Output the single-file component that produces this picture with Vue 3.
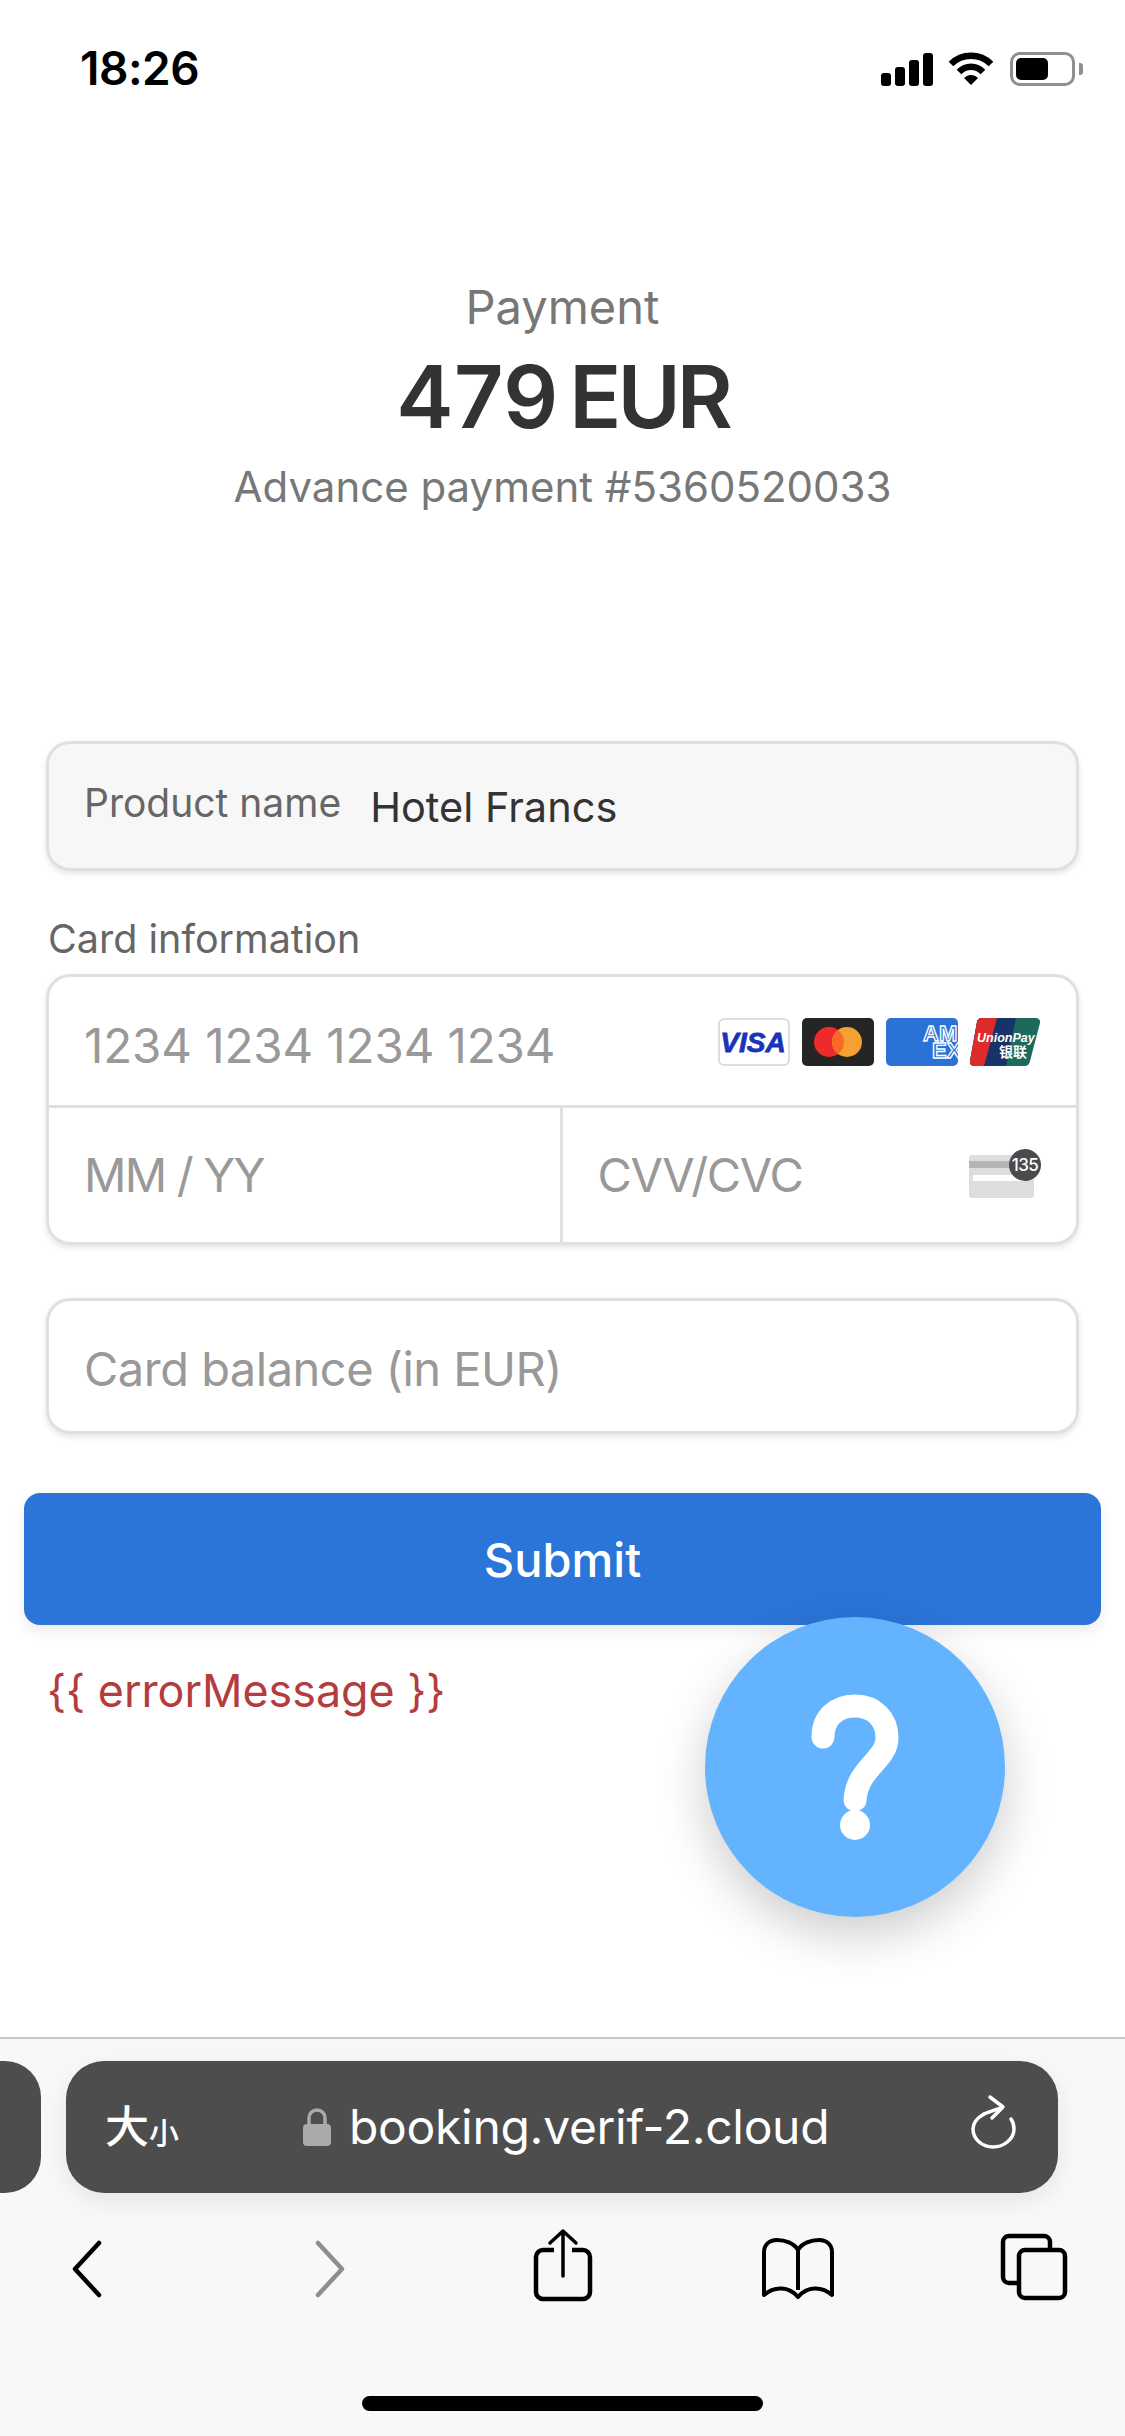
<template>
  <div class="page">
    <!-- status bar -->
    <div class="status">
      <span class="time">18:26</span>
      <div class="status-icons">
        <svg class="signal" width="52" height="34" viewBox="0 0 52 34">
          <rect x="0" y="20" width="10" height="13" rx="3" />
          <rect x="14" y="14" width="10" height="19" rx="3" />
          <rect x="28" y="7" width="10" height="26" rx="3" />
          <rect x="42" y="0" width="10" height="33" rx="3" />
        </svg>
        <svg class="wifi" width="46" height="34" viewBox="0 0 46 34">
          <path d="M3 12 C14 1 32 1 43 12" fill="none" stroke="#000" stroke-width="6.5" stroke-linecap="butt" />
          <path d="M11 20 C18 13 28 13 35 20" fill="none" stroke="#000" stroke-width="6.5" />
          <path d="M16 26 C20 22 26 22 30 26 L23 33 Z" fill="#000" />
        </svg>
        <div class="battery"><div class="battery-fill"></div></div>
        <div class="battery-cap"></div>
      </div>
    </div>

    <!-- heading -->
    <div class="heading">
      <div class="heading-label">Payment</div>
      <div class="heading-amount"><span class="digits">479</span> <span class="currency">EUR</span></div>
      <div class="heading-desc">Advance payment #5360520033</div>
    </div>

    <!-- form -->
    <div class="form">
      <div class="box product">
        <span class="product-label">Product name</span>
        <span class="product-value">Hotel Francs</span>
      </div>

      <div class="section-label">Card information</div>
      <div class="box card">
        <div class="card-row">
          <span class="placeholder number">1234 1234 1234 1234</span>
          <div class="brands">
            <svg width="72" height="48" viewBox="0 0 72 48">
              <rect x="1" y="1" width="70" height="46" rx="5" fill="#fff" stroke="#d4d4d4" stroke-width="1.5" />
              <text x="35" y="34" class="visa-text">VISA</text>
            </svg>
            <svg width="72" height="48" viewBox="0 0 72 48">
              <rect width="72" height="48" rx="5" fill="#252525" />
              <circle cx="27" cy="24" r="15" fill="#ee2b2b" />
              <circle cx="45" cy="24" r="15" fill="#f4a033" />
              <path d="M36 12 a15 15 0 0 1 0 24 a15 15 0 0 1 0 -24 Z" fill="#fb6a24" />
            </svg>
            <svg width="72" height="48" viewBox="0 0 72 48">
              <defs>
                <clipPath id="amex-clip"><rect width="72" height="48" rx="5" /></clipPath>
              </defs>
              <g clip-path="url(#amex-clip)">
                <rect width="72" height="48" fill="#2b72d6" />
                <text x="37" y="23" class="amex-text">AM</text>
                <text x="46" y="40" class="amex-text">EX</text>
              </g>
            </svg>
            <svg width="70" height="48" viewBox="0 0 70 48">
              <defs>
                <clipPath id="up-clip"><path d="M11 0 H66 a4 4 0 0 1 4 5 L60 43 a6 6 0 0 1 -6 5 H4 a4 4 0 0 1 -4 -5 L7 4 a5 5 0 0 1 4 -4 Z" /></clipPath>
              </defs>
              <g clip-path="url(#up-clip)">
                <rect width="70" height="48" fill="#1c6a5e" />
                <path d="M0 0 H46 L36 48 H0 Z" fill="#173468" />
                <path d="M0 0 H27 L14 48 H0 Z" fill="#df2a2a" />
                <text x="7" y="24" class="up-text">UnionPay</text>
                <text x="29" y="39" class="up-cn">银联</text>
              </g>
            </svg>
          </div>
        </div>
        <div class="card-split">
          <div class="card-cell"><span class="placeholder expiry">MM / YY</span></div>
          <div class="card-cell cvv">
            <span class="placeholder code">CVV/CVC</span>
            <svg class="cvv-icon" width="72" height="50" viewBox="0 0 72 50">
              <rect x="0" y="6" width="65" height="43" rx="3" fill="#dddddd" />
              <rect x="0" y="12" width="65" height="7" fill="#b5b5b5" />
              <rect x="4" y="26" width="50" height="6" fill="#fff" />
              <circle cx="56" cy="16" r="16" fill="#4b4b4b" />
              <text x="56" y="22" class="cvv-text">135</text>
            </svg>
          </div>
        </div>
      </div>

      <div class="box balance"><span class="placeholder amount">Card balance (in EUR)</span></div>
    </div>

    <button class="submit">Submit</button>
    <p class="error" v-pre>{{ errorMessage }}</p>

    <!-- floating help button -->
    <div class="fab">
      <svg width="90" height="148" viewBox="0 0 90 148">
        <path d="M13 44 C13 25 26 13 45 13 C64 13 77 26 77 45 C77 67 47 75 45 107" fill="none" stroke="#fff" stroke-width="23" stroke-linecap="round" />
        <ellipse cx="45" cy="132" rx="15" ry="15" fill="#fff" />
      </svg>
    </div>

    <!-- safari toolbar -->
    <div class="toolbar">
      <div class="url-row">
        <div class="tab-peek"></div>
        <div class="url-bar">
          <span class="aa"><span class="aa-big">大</span><span class="aa-small">小</span></span>
          <div class="url-main">
            <svg width="30" height="40" viewBox="0 0 30 40">
              <path d="M7 19 V11 a8 8 0 0 1 16 0 V19" fill="none" stroke="#aaa" stroke-width="3.5" />
              <rect x="1" y="17" width="28" height="22" rx="4" fill="#aaa" />
            </svg>
            <span class="url-text">booking.verif-2.cloud</span>
          </div>
          <svg class="reload" width="48" height="56" viewBox="0 0 48 56">
            <path d="M14 20 C7 24 3 29 3 35 C3 45 12 53 23 53 C34 53 44 45 44 35 C44 31 43 28 41 25" fill="none" stroke="#fff" stroke-width="3.5" stroke-linecap="round" />
            <path d="M14 20 C18 18 22 17 31 14 M20 3 L33 13 L22 24" fill="none" stroke="#fff" stroke-width="3.5" stroke-linecap="round" stroke-linejoin="round" />
          </svg>
        </div>
      </div>

      <div class="nav-row">
        <svg class="nav-back" width="30" height="58" viewBox="0 0 30 58">
          <path d="M27 3 L3 29 L27 55" fill="none" stroke="#000" stroke-width="4.5" stroke-linecap="round" stroke-linejoin="round" />
        </svg>
        <svg class="nav-forward" width="30" height="58" viewBox="0 0 30 58">
          <path d="M3 3 L27 29 L3 55" fill="none" stroke="#8e8e8e" stroke-width="4.5" stroke-linecap="round" stroke-linejoin="round" />
        </svg>
        <svg class="nav-share" width="60" height="74" viewBox="0 0 60 74">
          <path d="M21 22 H10 a7 7 0 0 0 -7 7 V64 a7 7 0 0 0 7 7 H50 a7 7 0 0 0 7 -7 V29 a7 7 0 0 0 -7 -7 H39" fill="none" stroke="#000" stroke-width="4.5" />
          <path d="M30 3 V48 M17 15 L30 3 L43 15" fill="none" stroke="#000" stroke-width="3.5" stroke-linecap="round" stroke-linejoin="round" />
        </svg>
        <svg class="nav-book" width="74" height="62" viewBox="0 0 74 62">
          <path d="M37 12 C33 5 24 2 16 2 C8 2 3 7 3 14 V57 C13 48 28 48 37 59 C46 48 61 48 71 57 V14 C71 7 66 2 58 2 C50 2 41 5 37 12 V52" fill="none" stroke="#000" stroke-width="4" stroke-linejoin="round" />
        </svg>
        <svg class="nav-tabs" width="68" height="68" viewBox="0 0 68 68">
          <path d="M18 50 H9 a6 6 0 0 1 -6 -6 V9 a6 6 0 0 1 6 -6 H44 a6 6 0 0 1 6 6 V16" fill="none" stroke="#000" stroke-width="4.5" />
          <rect x="19" y="17" width="46" height="48" rx="6" fill="none" stroke="#000" stroke-width="4.5" />
        </svg>
      </div>

      <div class="home-indicator"></div>
    </div>
  </div>
</template>

<script setup>
</script>

<style>
html,
body {
  background: #fff;
}
</style>

<style scoped>
.page {
  position: relative;
  width: 1125px;
  height: 2436px;
  display: flex;
  flex-direction: column;
  overflow: hidden;
  background: #fff;
  font-family: Inter, "Noto Sans", sans-serif;
}

.status {
  display: flex;
  justify-content: space-between;
  height: 138px;
  padding: 44px 42px 0 80px;
  box-sizing: border-box;
}
.time {
  font-size: 46px;
  line-height: 48px;
  font-weight: 600;
  color: #000;
  letter-spacing: -0.5px;
}
.status-icons {
  display: flex;
  align-items: flex-start;
  padding-top: 8px;
}
.signal {
  fill: #000;
  margin-top: 1px;
}
.wifi {
  margin-left: 15px;
}
.battery {
  margin-left: 16px;
  width: 65px;
  height: 34px;
  box-sizing: border-box;
  border: 3px solid #8f8f8f;
  border-radius: 10px;
  padding: 3px;
}
.battery-fill {
  width: 32px;
  height: 100%;
  background: #000;
  border-radius: 5px;
}
.battery-cap {
  width: 4px;
  height: 12px;
  margin: 11px 0 0 4px;
  background: #8f8f8f;
  border-radius: 0 3px 3px 0;
}

.heading {
  text-align: center;
  padding-top: 142px;
  height: 603px;
  box-sizing: border-box;
}
.heading-label {
  font-size: 47px;
  line-height: 54px;
  color: #777;
}
.heading-amount {
  margin-top: 18px;
  font-size: 86px;
  line-height: 90px;
  font-weight: 600;
  color: #333;
  word-spacing: -11px;
}
.digits {
  letter-spacing: 0.5px;
}
.currency {
  letter-spacing: -4px;
}
.heading-desc {
  margin-top: 17px;
  font-size: 42px;
  line-height: 56px;
  color: #777;
}

.form {
  padding: 0 46px;
}
.box {
  box-sizing: border-box;
  border: 3px solid #e0e0e0;
  border-radius: 24px;
  background: #fff;
  box-shadow: 0 3px 6px rgba(0, 0, 0, 0.1);
}
.product {
  display: flex;
  height: 130px;
  padding-left: 35px;
  background: #f7f7f7;
}
.product-label {
  margin-top: 35px;
  font-size: 39px;
  line-height: 48px;
  color: #666;
}
.product-value {
  margin: 38px 0 0 29px;
  font-size: 41.5px;
  line-height: 50px;
  color: #333;
}
.section-label {
  margin: 43px 0 0 2px;
  font-size: 39.5px;
  line-height: 50px;
  height: 60px;
  color: #666;
}
.card {
  height: 271px;
  display: flex;
  flex-direction: column;
}
.card-row {
  height: 119px;
  padding: 9px 36px 0 35px;
  display: flex;
  justify-content: space-between;
  align-items: center;
  border-bottom: 3px solid #e0e0e0;
}
.placeholder {
  font-size: 47px;
  line-height: 56px;
  color: #999;
}
.number {
  font-size: 47.5px;
  letter-spacing: -0.1px;
}
.expiry {
  letter-spacing: -1.8px;
}
.code {
  letter-spacing: -1.3px;
}
.amount {
  letter-spacing: -0.5px;
  margin-top: 5px;
}
.brands {
  display: flex;
  gap: 12px;
  margin-top: -8px;
}
.visa-text {
  font-family: "Liberation Sans", sans-serif;
  font-size: 28px;
  font-weight: 700;
  font-style: italic;
  fill: #1a33b8;
  stroke: #1a33b8;
  stroke-width: 0.8px;
  text-anchor: middle;
}
.amex-text {
  font-family: "Liberation Sans", sans-serif;
  font-size: 22px;
  font-weight: 700;
  fill: #2b72d6;
  stroke: #fff;
  stroke-width: 1.3px;
}
.up-text {
  font-family: "Liberation Sans", sans-serif;
  font-size: 12.5px;
  font-weight: 700;
  font-style: italic;
  fill: #fff;
}
.up-cn {
  font-family: "Noto Sans CJK SC", sans-serif;
  font-size: 14px;
  font-weight: 700;
  fill: #fff;
}
.card-split {
  flex: 1;
  display: flex;
}
.card-cell {
  flex: 0 0 calc(50% - 3px);
  box-sizing: border-box;
  display: flex;
  align-items: center;
  padding-left: 35px;
}
.card-cell.cvv {
  flex: 1;
  justify-content: space-between;
  padding: 0 35px 0 35px;
  border-left: 3px solid #e0e0e0;
}
.cvv-icon {
  margin-top: -2px;
}
.cvv-text {
  font-family: Inter, sans-serif;
  font-size: 17px;
  font-weight: 500;
  letter-spacing: -0.5px;
  fill: #fff;
  text-anchor: middle;
}
.balance {
  margin-top: 53px;
  height: 136px;
  display: flex;
  align-items: center;
  padding-left: 35px;
}

.submit {
  margin: 59px 24px 0;
  height: 132px;
  border: none;
  border-radius: 16px;
  background: #2b75d8;
  color: #fff;
  font-family: inherit;
  font-size: 47px;
  font-weight: 500;
  box-shadow: 0 6px 14px rgba(0, 0, 0, 0.08);
}
.error {
  margin: 38px 0 0 47px;
  font-size: 44.8px;
  line-height: 56px;
  color: #b43c3c;
}

.fab {
  position: absolute;
  left: 705px;
  top: 1617px;
  width: 300px;
  height: 300px;
  border-radius: 50%;
  background: #63b3fe;
  box-shadow: 0 18px 50px rgba(0, 0, 0, 0.2);
  display: flex;
  align-items: center;
  justify-content: center;
}

.toolbar {
  margin-top: auto;
  height: 399px;
  box-sizing: border-box;
  border-top: 2px solid #c8c8c8;
  background: #f8f8f8;
  display: flex;
  flex-direction: column;
}
.url-row {
  display: flex;
  gap: 25px;
  margin-top: 22px;
  height: 132px;
}
.tab-peek {
  width: 41px;
  background: #4d4d4d;
  border-radius: 0 36px 36px 0;
}
.url-bar {
  width: 992px;
  background: #4d4d4d;
  border-radius: 38px;
  box-shadow: 0 8px 24px rgba(0, 0, 0, 0.08);
  display: flex;
  align-items: center;
  padding: 0 40px 0 39px;
  box-sizing: border-box;
  color: #fff;
}
.aa {
  width: 76px;
  margin-top: -7px;
  font-family: "Noto Sans CJK SC", sans-serif;
  font-weight: 500;
  display: flex;
  align-items: flex-end;
  line-height: 1;
}
.aa-big {
  font-size: 44px;
}
.aa-small {
  font-size: 30px;
}
.url-main {
  flex: 1;
  display: flex;
  align-items: center;
  gap: 17px;
  margin-left: 121px;
}
.url-text {
  font-size: 48px;
  line-height: 60px;
  letter-spacing: -0.3px;
}
.reload {
  margin-top: -10px;
}

.nav-row {
  display: flex;
  align-items: flex-start;
  margin-top: 35px;
  padding-left: 72px;
  height: 74px;
}
.nav-back {
  margin-top: 12px;
}
.nav-forward {
  margin: 12px 0 0 213px;
}
.nav-share {
  margin-left: 188px;
}
.nav-book {
  margin: 10px 0 0 168px;
}
.nav-tabs {
  margin: 5px 0 0 165px;
}

.home-indicator {
  width: 401px;
  height: 15px;
  margin: 94px auto 0;
  background: #000;
  border-radius: 8px;
}
</style>
